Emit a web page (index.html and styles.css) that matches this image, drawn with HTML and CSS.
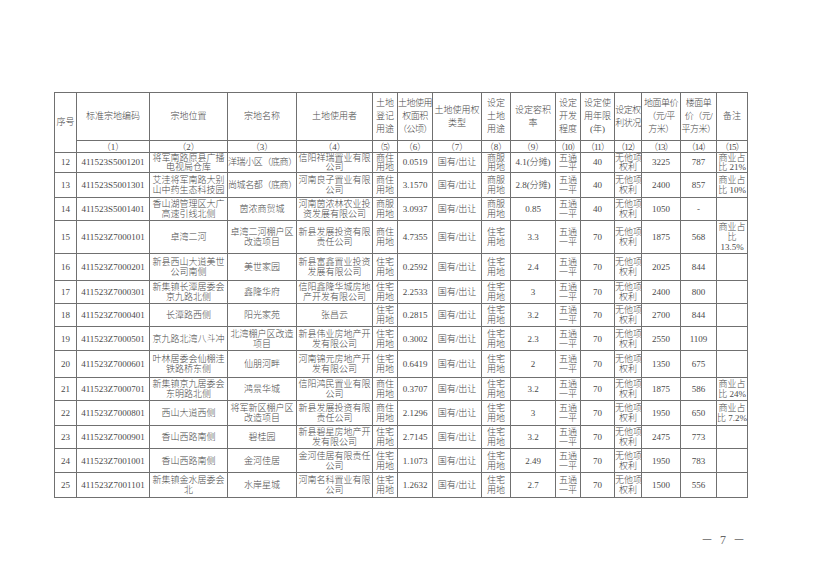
FILE: index.html
```html
<!DOCTYPE html>
<html lang="zh-CN">
<head>
<meta charset="utf-8">
<title>宗地表</title>
<link rel="stylesheet" href="styles.css">
</head>
<body>
<div class="page">
<table class="land">
<colgroup>
<col class="c0"><col class="c1"><col class="c2"><col class="c3"><col class="c4"><col class="c5"><col class="c6"><col class="c7"><col class="c8"><col class="c9"><col class="c10"><col class="c11"><col class="c12"><col class="c13"><col class="c14"><col class="c15">
</colgroup>
<thead>
<tr class="head">
<th rowspan="2">序号</th>
<th>标准宗地编码</th>
<th>宗地位置</th>
<th>宗地名称</th>
<th>土地使用者</th>
<th>土地<br>登记<br>用途</th>
<th class="narrow">土地使用<br>权面积<br>（公顷）</th>
<th>土地使用权<br>类型</th>
<th>设定<br>土地<br>用途</th>
<th>设定容积<br>率</th>
<th>设定<br>开发<br>程度</th>
<th>设定使<br>用年限<br>(年)</th>
<th class="narrow">设定权<br>利状况</th>
<th class="narrow">地面单价<br>（元/平<br>方米）</th>
<th class="narrow">楼面单<br>价（元/<br>平方米）</th>
<th>备注</th>
</tr>
<tr class="nums">
<th>（1）</th><th>（2）</th><th>（3）</th><th>（4）</th><th class="squeeze">（5）</th><th>（6）</th><th>（7）</th><th>（8）</th><th>（9）</th><th class="squeeze">（10）</th><th class="squeeze">（11）</th><th class="squeeze">（12）</th><th class="squeeze">（13）</th><th class="squeeze">（14）</th><th class="squeeze">（15）</th>
</tr>
</thead>
<tbody>
<tr class="r12"><td>12</td><td>411523S5001201</td><td>将军南路原县广播<br>电视局仓库</td><td class="tight">洋瑞小区（底商）</td><td>信阳祥瑞置业有限<br>公司</td><td>商住<br>用地</td><td>0.0519</td><td>国有/出让</td><td>商服<br>用地</td><td>4.1(分摊)</td><td>五通<br>一平</td><td>40</td><td>无他项<br>权利</td><td>3225</td><td>787</td><td>商业占<br>比 21%</td></tr>
<tr class="r13"><td>13</td><td>411523S5001301</td><td>艾洼将军南路大别<br>山中药生态科技园</td><td class="tight">尚城名都（底商）</td><td>河南良子置业有限<br>公司</td><td>商住<br>用地</td><td>3.1570</td><td>国有/出让</td><td>商服<br>用地</td><td>2.8(分摊)</td><td>五通<br>一平</td><td>40</td><td>无他项<br>权利</td><td>2400</td><td>857</td><td>商业占<br>比 10%</td></tr>
<tr class="r14"><td>14</td><td>411523S5001401</td><td>香山湖管理区大广<br>高速引线北侧</td><td>茵浓商贸城</td><td>河南茵浓林农业投<br>资发展有限公司</td><td>商服<br>用地</td><td>3.0937</td><td>国有/出让</td><td>商服<br>用地</td><td>0.85</td><td>五通<br>一平</td><td>40</td><td>无他项<br>权利</td><td>1050</td><td>-</td><td></td></tr>
<tr class="r15"><td>15</td><td>411523Z7000101</td><td>卓湾二河</td><td>卓湾二河棚户区<br>改造项目</td><td>新县发展投资有限<br>责任公司</td><td>商住<br>用地</td><td>4.7355</td><td>国有/出让</td><td>住宅<br>用地</td><td>3.3</td><td>五通<br>一平</td><td>70</td><td>无他项<br>权利</td><td>1875</td><td>568</td><td>商业占<br>比<br>13.5%</td></tr>
<tr class="r16"><td>16</td><td>411523Z7000201</td><td>新县西山大道美世<br>公司南侧</td><td>美世家园</td><td>新县富鑫置业投资<br>发展有限公司</td><td>住宅<br>用地</td><td>0.2592</td><td>国有/出让</td><td>住宅<br>用地</td><td>2.4</td><td>五通<br>一平</td><td>70</td><td>无他项<br>权利</td><td>2025</td><td>844</td><td></td></tr>
<tr class="r17"><td>17</td><td>411523Z7000301</td><td>新集镇长潭居委会<br>京九路北侧</td><td>鑫隆华府</td><td>信阳鑫隆华城房地<br>产开发有限公司</td><td>住宅<br>用地</td><td>2.2533</td><td>国有/出让</td><td>住宅<br>用地</td><td>3</td><td>五通<br>一平</td><td>70</td><td>无他项<br>权利</td><td>2400</td><td>800</td><td></td></tr>
<tr class="r18"><td>18</td><td>411523Z7000401</td><td>长潭路西侧</td><td>阳光家苑</td><td>张昌云</td><td>住宅<br>用地</td><td>0.2815</td><td>国有/出让</td><td>住宅<br>用地</td><td>3.2</td><td>五通<br>一平</td><td>70</td><td>无他项<br>权利</td><td>2700</td><td>844</td><td></td></tr>
<tr class="r19"><td>19</td><td>411523Z7000501</td><td>京九路北湾八斗冲</td><td>北湾棚户区改造<br>项目</td><td>新县伟业房地产开<br>发有限公司</td><td>住宅<br>用地</td><td>0.3002</td><td>国有/出让</td><td>住宅<br>用地</td><td>2.3</td><td>五通<br>一平</td><td>70</td><td>无他项<br>权利</td><td>2550</td><td>1109</td><td></td></tr>
<tr class="r20"><td>20</td><td>411523Z7000601</td><td>叶林居委会仙棚洼<br>铁路桥东侧</td><td>仙朋河畔</td><td>河南锦元房地产开<br>发有限公司</td><td>住宅<br>用地</td><td>0.6419</td><td>国有/出让</td><td>住宅<br>用地</td><td>2</td><td>五通<br>一平</td><td>70</td><td>无他项<br>权利</td><td>1350</td><td>675</td><td></td></tr>
<tr class="r21"><td>21</td><td>411523Z7000701</td><td>新集镇京九居委会<br>东明路北侧</td><td>鸿景华城</td><td>信阳鸿民置业有限<br>公司</td><td>商住<br>用地</td><td>0.3707</td><td>国有/出让</td><td>住宅<br>用地</td><td>3.2</td><td>五通<br>一平</td><td>70</td><td>无他项<br>权利</td><td>1875</td><td>586</td><td>商业占<br>比 24%</td></tr>
<tr class="r22"><td>22</td><td>411523Z7000801</td><td>西山大道西侧</td><td>将军新区棚户区<br>改造项目</td><td>新县发展投资有限<br>责任公司</td><td>商住<br>用地</td><td>2.1296</td><td>国有/出让</td><td>住宅<br>用地</td><td>3</td><td>五通<br>一平</td><td>70</td><td>无他项<br>权利</td><td>1950</td><td>650</td><td>商业占<br>比 7.2%</td></tr>
<tr class="r23"><td>23</td><td>411523Z7000901</td><td>香山西路南侧</td><td>碧桂园</td><td>新县碧星房地产开<br>发有限公司</td><td>住宅<br>用地</td><td>2.7145</td><td>国有/出让</td><td>住宅<br>用地</td><td>3.2</td><td>五通<br>一平</td><td>70</td><td>无他项<br>权利</td><td>2475</td><td>773</td><td></td></tr>
<tr class="r24"><td>24</td><td>411523Z7001001</td><td>香山西路南侧</td><td>金河佳居</td><td>金河佳居有限责任<br>公司</td><td>住宅<br>用地</td><td>1.1073</td><td>国有/出让</td><td>住宅<br>用地</td><td>2.49</td><td>五通<br>一平</td><td>70</td><td>无他项<br>权利</td><td>1950</td><td>783</td><td></td></tr>
<tr class="r25"><td>25</td><td>411523Z7001101</td><td>新集镇金水居委会<br>北</td><td>水岸星城</td><td>河南名科置业有限<br>公司</td><td>住宅<br>用地</td><td>1.2632</td><td>国有/出让</td><td>住宅<br>用地</td><td>2.7</td><td>五通<br>一平</td><td>70</td><td>无他项<br>权利</td><td>1500</td><td>556</td><td></td></tr>
</tbody>
</table>
<div class="pageno">－ 7 －</div>
</div>
</body>
</html>
```
FILE: styles.css
```css
html, body {
  margin: 0;
  padding: 0;
  background: #ffffff;
}
.page {
  width: 824px;
  height: 578px;
  padding: 92px 0 0 54px;
  box-sizing: border-box;
  font-family: "Liberation Serif", "Noto Sans CJK SC", serif;
  color: #4a4a4a;
}
.land {
  border-collapse: collapse;
  table-layout: fixed;
  width: 693px;
  font-size: 9px;
  font-weight: 300;
}
.land th, .land td {
  border: 1px solid #707070;
  padding: 0;
  text-align: center;
  vertical-align: middle;
  font-weight: 300;
  overflow: hidden;
  white-space: nowrap;
}
.land td { line-height: 10px; }
.land th { line-height: 13px; }
.land th.narrow { letter-spacing: -0.5px; }
.c0 { width: 22px; }
.c1 { width: 73px; }
.c2 { width: 78px; }
.c3 { width: 69px; }
.c4 { width: 76px; }
.c5 { width: 25px; }
.c6 { width: 35px; }
.c7 { width: 49px; }
.c8 { width: 29px; }
.c9 { width: 45px; }
.c10 { width: 25px; }
.c11 { width: 34px; }
.c12 { width: 27px; }
.c13 { width: 39px; }
.c14 { width: 36px; }
.c15 { width: 31px; }
.head { height: 48px; }
.nums { height: 12px; }
.nums th {
  line-height: 10px;
  font-size: 9px;
  letter-spacing: 0;
}
.nums th.squeeze { letter-spacing: -0.8px; }
.r12 { height: 20px; }
.r13 { height: 25px; }
.r14 { height: 23px; }
.r15 { height: 33px; }
.r16 { height: 27px; }
.r17 { height: 23px; }
.r18 { height: 23px; }
.r19 { height: 24px; }
.r20 { height: 27px; }
.r21 { height: 23px; }
.r22 { height: 25px; }
.r23 { height: 23px; }
.r24 { height: 24px; }
.r25 { height: 25px; }
.r12 td { line-height: 9px; }
.tight { letter-spacing: -0.4px; }
.pageno {
  width: 693px;
  text-align: right;
  margin-top: 32px;
  font-size: 12px;
  color: #666;
  letter-spacing: 2px;
}
```
